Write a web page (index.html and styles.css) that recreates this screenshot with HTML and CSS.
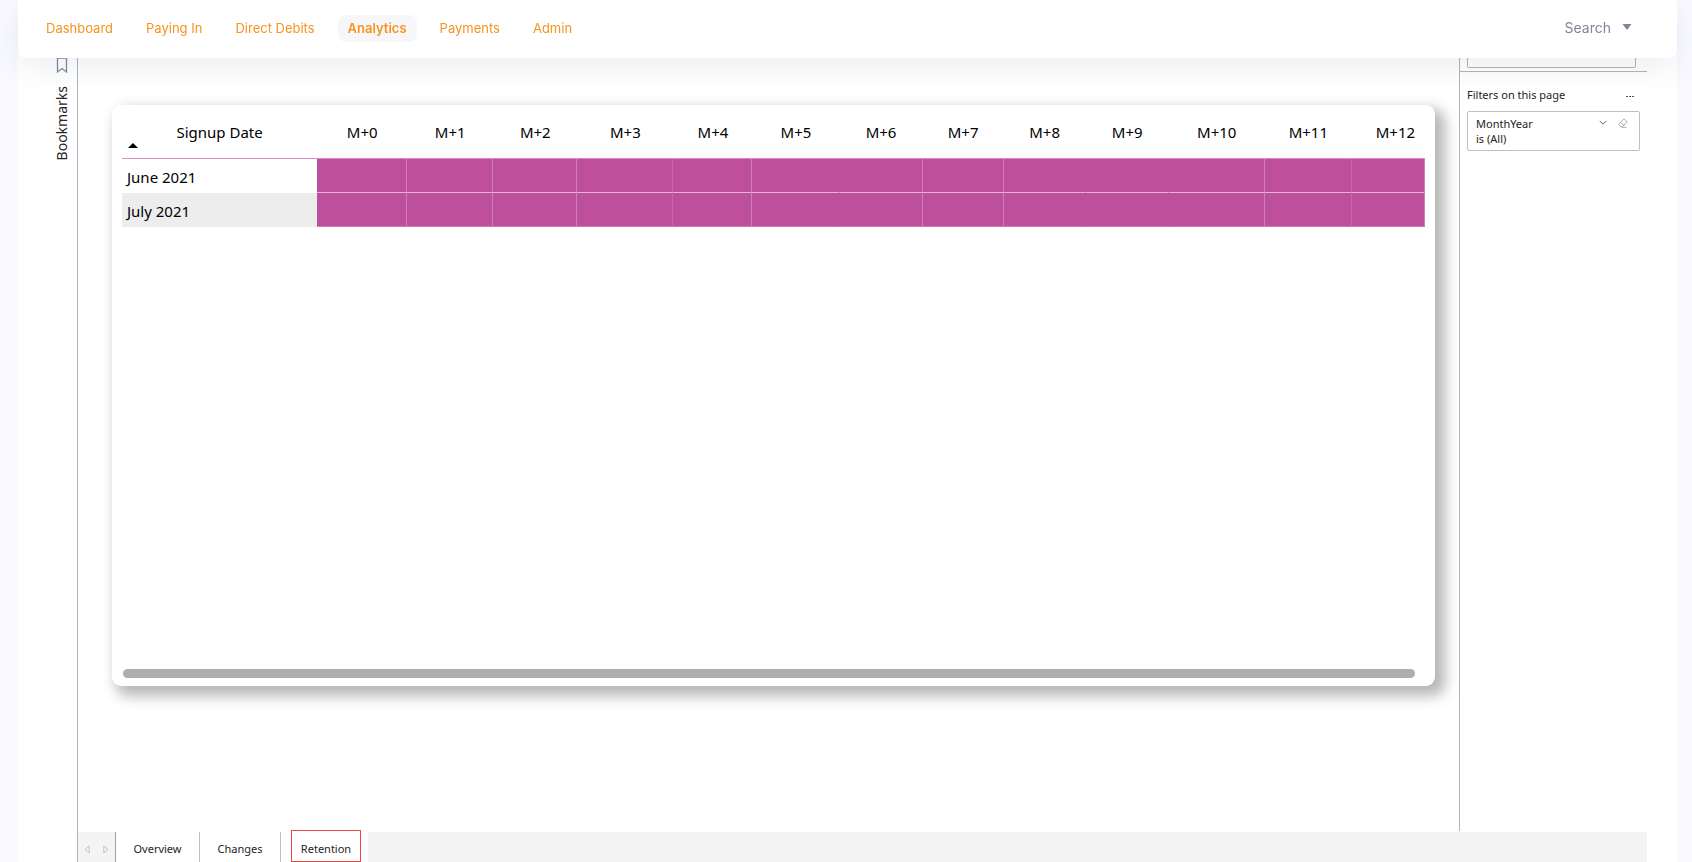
FILE: index.html
```html
<!DOCTYPE html>
<html lang="en">
<head>
<meta charset="utf-8">
<title>Analytics</title>
<link rel="stylesheet" href="styles.css">
</head>
<body>
<header class="topbar">
  <nav class="nav">
    <a href="#">Dashboard</a>
    <a href="#">Paying In</a>
    <a href="#">Direct Debits</a>
    <a href="#" class="active">Analytics</a>
    <a href="#">Payments</a>
    <a href="#">Admin</a>
  </nav>
  <button class="search" type="button">Search
    <svg width="10" height="6" viewBox="0 0 10 6"><path d="M0.5 0h9L5 6z" fill="currentColor"/></svg>
  </button>
</header>
<main class="report">
  <aside class="rail">
    <svg width="12" height="17" viewBox="0 0 12 17"><path d="M1.5 1v14L6 11.5l4.500 3.500V1z" fill="none" stroke="#8484a0" stroke-width="1.300"/></svg>
    <span class="rail-label">Bookmarks</span>
  </aside>
  <section class="canvas">
    <div class="card">
      <table class="matrix">
        <colgroup>
          <col class="w195"><col class="w90"><col class="w86"><col class="w84"><col class="w96"><col class="w79"><col class="w87"><col class="w83"><col class="w81"><col class="w82"><col class="w83"><col class="w96"><col class="w87"><col class="w73">
        </colgroup>
        <thead>
          <tr><th class="sorted">Signup Date<svg class="sort" width="10" height="5" viewBox="0 0 10 5"><path d="M0 5h10L5 0z"/></svg></th><th>M+0</th><th>M+1</th><th>M+2</th><th>M+3</th><th>M+4</th><th>M+5</th><th>M+6</th><th>M+7</th><th>M+8</th><th>M+9</th><th>M+10</th><th>M+11</th><th class="clipped">M+12</th></tr>
        </thead>
        <tbody>
          <tr><th>June 2021</th><td></td><td></td><td></td><td class="soft"></td><td></td><td class="none"></td><td></td><td></td><td class="none"></td><td class="none"></td><td></td><td class="soft"></td><td></td></tr>
          <tr><th>July 2021</th><td></td><td></td><td></td><td class="soft"></td><td></td><td class="none"></td><td></td><td></td><td class="none"></td><td class="none"></td><td></td><td class="soft"></td><td></td></tr>
        </tbody>
      </table>
      <div class="scrollbar"></div>
    </div>
  </section>
  <aside class="filters">
    <div class="filter-search"><input type="text" aria-label="Search filters"></div>
    <div class="filters-head"><span>Filters on this page</span><button type="button" aria-label="More options"><svg width="9" height="2" viewBox="0 0 9 2"><path d="M0 0h2v1H0zM3 0h2v1H3zM6 0h2v1H6z" fill="#555"/></svg></button></div>
    <div class="filter-card">
      <div class="filter-text"><span>MonthYear</span><span>is (All)</span></div>
      <button type="button" aria-label="Expand"><svg width="8" height="6" viewBox="0 0 8 6"><path d="M0.800 1l3.200 3.200L7.200 1" fill="none" stroke="#666"/></svg></button>
      <button type="button" aria-label="Clear filter"><svg width="10" height="10" viewBox="0 0 10 10"><path d="M0.800 6L6 0.800l3.200 3.200L4.500 8.700H2.800L0.800 6.700zM2.700 4.200l3.200 3.200M4 9.300h4.500" fill="none" stroke="#a0a0a0" stroke-width="0.900"/></svg></button>
    </div>
  </aside>
  <footer class="tabs">
    <div class="pager">
      <button type="button" aria-label="Previous page"><svg width="6" height="9" viewBox="0 0 6 9"><path d="M5.200 1v7L1 4.500z" fill="none" stroke="#c4c4c4"/></svg></button>
      <button type="button" aria-label="Next page"><svg width="6" height="9" viewBox="0 0 6 9"><path d="M0.800 1v7L5 4.500z" fill="none" stroke="#c4c4c4"/></svg></button>
    </div>
    <button class="tab overview" type="button">Overview</button>
    <button class="tab changes" type="button">Changes</button>
    <div class="tab-current"><button class="retention" type="button">Retention</button></div>
  </footer>
</main>
</body>
</html>
```
FILE: styles.css
```css
* { box-sizing: border-box; }
body {
  margin: 0;
  padding: 0 15px 0 18px;
  background: #f9f9ff;
  color: #000;
  font-family: "Noto Sans", "Open Sans", sans-serif;
}
button { border: 0; padding: 0; background: none; font: inherit; color: inherit; cursor: pointer; }
svg { display: block; }

.topbar {
  position: fixed;
  z-index: 2;
  top: 0;
  left: 18px;
  right: 15px;
  height: 58px;
  padding: 0 45px 2px 18px;
  display: flex;
  align-items: center;
  justify-content: space-between;
  background: #fff;
  border-radius: 0 0 8px 8px;
  box-shadow: 0 10px 30px rgba(82, 97, 130, 0.1);
}
.nav { display: flex; gap: 13px; }
.nav a {
  padding: 0 10px;
  border-radius: 8px;
  color: #f7931e;
  font-family: Inter, sans-serif;
  font-size: 13px;
  line-height: 27px;
  text-decoration: none;
}
.nav .active { background: #f7f7fa; font-weight: 600; }
.search {
  display: flex;
  align-items: center;
  gap: 11px;
  padding-bottom: 2px;
  color: #83839c;
  font-family: Inter, sans-serif;
  font-size: 14px;
}

.report {
  min-height: 100vh;
  padding-right: 30px;
  display: grid;
  grid-template-columns: 59px 1fr 188px;
  grid-template-rows: 1fr 32px;
  background: #fff;
}
.rail {
  grid-row: 1 / 3;
  padding: 57px 8px 0 36px;
  display: flex;
  flex-direction: column;
  align-items: center;
  gap: 12px;
}
.rail-label {
  writing-mode: vertical-rl;
  transform: rotate(180deg);
  font-size: 14px;
  line-height: 20px;
  color: #252423;
}
.canvas {
  display: flex;
  padding: 105px 24px 144px 34px;
  border-left: 1px solid #b3b3b3;
}
.card {
  flex: 1;
  min-width: 0;
  padding: 0 10px 8px;
  display: flex;
  flex-direction: column;
  justify-content: space-between;
  background: #fff;
  border-radius: 9px;
  box-shadow: 7px 7px 14px 3px rgba(0, 0, 0, 0.29);
}
.matrix {
  width: 100%;
  table-layout: fixed;
  border-collapse: separate;
  border-spacing: 0;
  font-size: 15px;
  line-height: 20px;
}
.w195 { width: 195px; }
.w96 { width: 96px; }
.w90 { width: 90px; }
.w87 { width: 87px; }
.w86 { width: 86px; }
.w84 { width: 84px; }
.w83 { width: 83px; }
.w82 { width: 82px; }
.w81 { width: 81px; }
.w79 { width: 79px; }
.w73 { width: 73px; }
.matrix th { font-weight: 400; padding: 0; white-space: nowrap; }
.matrix thead th { height: 54px; border-bottom: 1px solid #d98fc4; }
.matrix .sorted { position: relative; }
.matrix .clipped { padding-left: 14px; }
.sort { position: absolute; left: 6px; bottom: 10px; }
.matrix tbody th { height: 34px; padding-left: 5px; padding-top: 2px; text-align: left; }
.matrix tbody tr + tr th { background: #ededed; }
.matrix td {
  padding: 0;
  background: #bd4f9d;
  border-right: 1px solid #cf7fb8;
  border-bottom: 1px solid #dfb6d2;
}
.matrix tbody tr + tr td { border-bottom-color: #cf7fb8; }
.matrix .soft { border-right-color: #c565aa; }
.matrix .none { border-right-color: #bd4f9d; }
.scrollbar { height: 9px; margin: 0 10px 0 1px; border-radius: 5px; background: #afaeac; }

.filters {
  margin-bottom: -1px;
  border-left: 1px solid #b3b3b3;
  font-size: 11px;
  line-height: 15px;
  color: #252423;
}
.filter-search { padding: 44px 11px 3px 7px; border-bottom: 1px solid #b3b3b3; }
.filter-search input {
  display: block;
  width: 100%;
  height: 24px;
  border: 1px solid #b3b3b3;
  border-radius: 2px;
  background: #fff;
}
.filters-head { display: flex; justify-content: space-between; align-items: center; padding: 15px 12px 9px 7px; }
.filters-head button { padding-top: 4px; }
.filter-card {
  margin: 0 7px;
  height: 40px;
  padding: 4px 11px 0 8px;
  display: flex;
  align-items: flex-start;
  gap: 11px;
  border: 1px solid #c0c0c0;
  border-radius: 2px;
}
.filter-text { flex: 1; display: flex; flex-direction: column; }
.filter-card button { height: 13px; display: flex; align-items: center; }

.tabs {
  grid-column: 2 / 4;
  display: flex;
  align-items: flex-end;
  border-left: 1px solid #b3b3b3;
  background: linear-gradient(transparent 2px, #f4f4f4 2px);
  font-size: 11px;
  color: #252423;
}
.pager {
  width: 38px;
  height: 30px;
  padding: 4px 6px 0;
  display: flex;
  justify-content: space-between;
  align-items: center;
  border-right: 1px solid #a0a0a0;
}
.tab { height: 30px; padding-top: 3px; background: #fff; border-right: 1px solid #c0c0c0; }
.overview { width: 84px; }
.changes { width: 81px; }
.tab-current { height: 32px; padding: 0 7px 0 10px; background: #fff; }
.retention { width: 70px; height: 32px; padding-top: 5px; border: 1px solid #f04545; }
```
